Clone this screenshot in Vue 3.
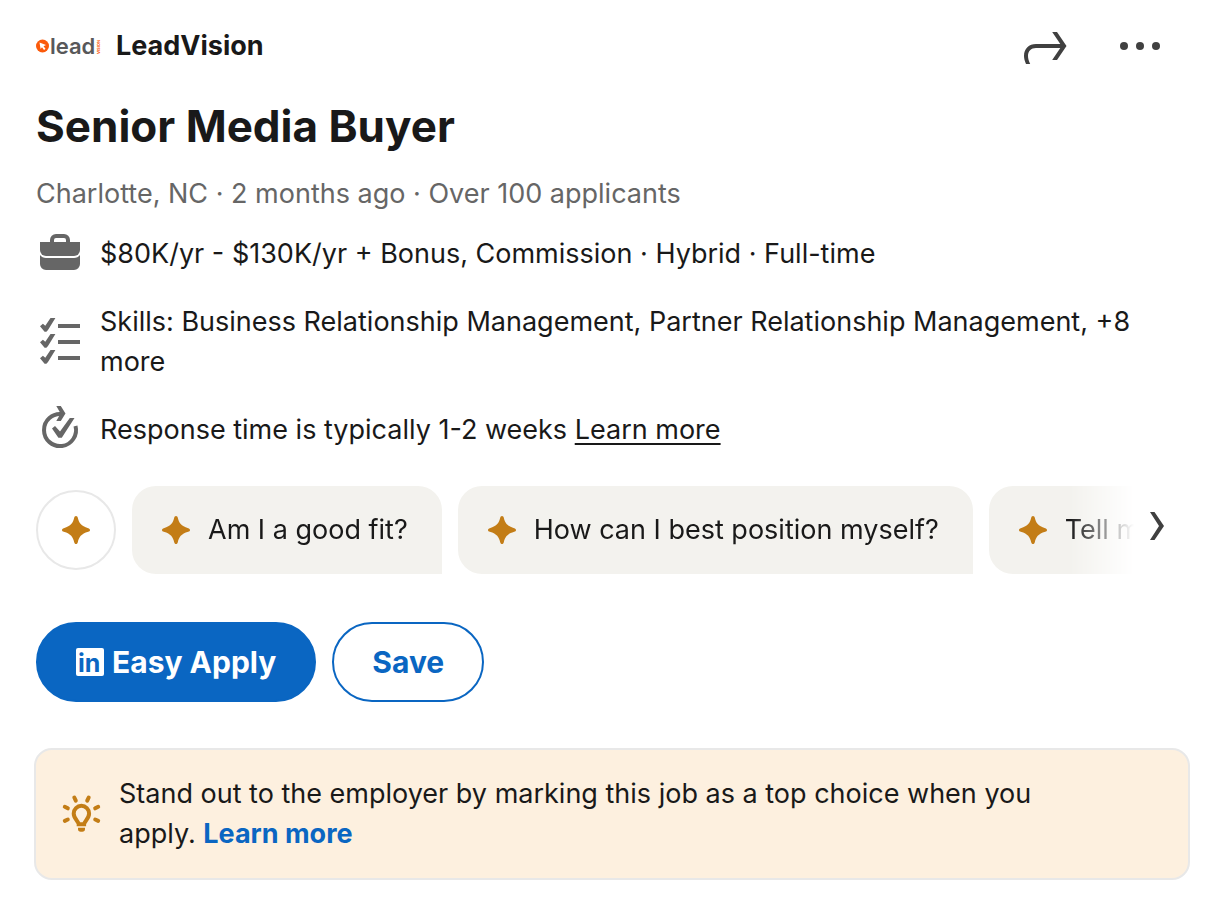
<template>
  <main class="job-page">
    <section class="job-details">
      <header class="job-header">
        <a href="#" class="company">
          <svg class="company-logo" viewBox="0 0 64 24" aria-hidden="true">
            <circle cx="6.5" cy="12" r="6.5" fill="#fb5a0b" />
            <path d="M3.5 8.5 10 11 7.5 12.3 9.5 14.8 8 16 6 13.2 4.6 15z" fill="#fff" />
            <text x="14" y="20" class="logo-word">lead</text>
            <text x="-20" y="64" transform="rotate(-90)" class="logo-side">VISION</text>
          </svg>
          <span class="company-name">LeadVision</span>
        </a>
        <div class="header-actions">
          <button class="icon-btn" aria-label="Share">
            <svg viewBox="0 0 48 48">
              <path d="M6 42C4.500 38.500 4 36 4 34c0-7.500 5-12 12-12h24.300L32.200 10H37l9.500 14L37 38h-4.800l8.100-12H16c-5 0-8 3-8 8 0 2 .7 5 2.200 8z" />
            </svg>
          </button>
          <button class="icon-btn" aria-label="More options">
            <svg viewBox="0 0 48 48">
              <circle cx="8" cy="24" r="4" />
              <circle cx="24" cy="24" r="4" />
              <circle cx="40" cy="24" r="4" />
            </svg>
          </button>
        </div>
      </header>

      <h1>Senior Media Buyer</h1>
      <p class="job-meta">Charlotte, NC · 2 months ago · Over 100 applicants</p>

      <ul class="insights">
        <li>
          <svg class="insight-icon" viewBox="0 0 48 48">
            <path d="M14 12V10a6 6 0 0 1 6-6h8a6 6 0 0 1 6 6v2h-4v-2a2 2 0 0 0-2-2h-8a2 2 0 0 0-2 2v2z" />
            <path d="M4 12h40v8a6 6 0 0 1-6 6H10a6 6 0 0 1-6-6z" />
            <path d="M4 25c1.500 2 3.500 3 6 3h28c2.500 0 4.500-1 6-3v9a6 6 0 0 1-6 6H10a6 6 0 0 1-6-6z" />
          </svg>
          <span>$80K/yr - $130K/yr + Bonus, Commission · Hybrid · Full-time</span>
        </li>
        <li>
          <svg class="insight-icon" viewBox="0 0 48 48">
            <g v-for="y in [0, 16, 32]" :key="y" :transform="`translate(4 ${y})`">
              <path d="M0 8.300l2.900-2.500 2.400 2L10.500 0h4.900L8 12l-1.600 1.800H4.600z" />
              <path d="M18 6h22v4H18z" />
            </g>
          </svg>
          <span>Skills: Business Relationship Management, Partner Relationship Management, +8 more</span>
        </li>
        <li>
          <svg class="insight-icon" viewBox="0 0 48 48">
            <path d="M39.500 20A16 16 0 1 1 26 8.200" fill="none" stroke="currentColor" stroke-width="4" />
            <path d="M20.300 0h4.500l4.700 7.600-4.700 7.400h-4.500l4.300-7.400z" />
            <path d="M16 22.500l3-2.500 5 5.400L33.800 12h4.700L25.800 31.700h-3.400z" />
          </svg>
          <span>Response time is typically 1-2 weeks <a href="#" class="text-link">Learn more</a></span>
        </li>
      </ul>

      <div class="prompts">
        <button class="spark-btn" aria-label="Ask about this job">
          <svg class="spark" viewBox="0 0 28 28"><path :d="sparkPath" /></svg>
        </button>
        <div class="prompt-list">
          <button v-for="prompt in prompts" :key="prompt" class="prompt">
            <svg class="spark" viewBox="0 0 28 28"><path :d="sparkPath" /></svg>
            <span>{{ prompt }}</span>
          </button>
        </div>
        <button class="next-btn" aria-label="Next">
          <svg viewBox="0 0 14 28"><path d="M0 0h4.500L14 14 4.500 28H0l9-14z" /></svg>
        </button>
      </div>

      <div class="actions">
        <button class="btn btn-apply">
          <svg viewBox="0 0 28 28" aria-hidden="true">
            <rect width="28" height="28" rx="2" fill="#fff" />
            <text x="2" y="24" class="in-mark">in</text>
          </svg>
          <span>Easy Apply</span>
        </button>
        <button class="btn btn-save">Save</button>
      </div>
    </section>

    <aside class="top-choice">
      <svg class="bulb" viewBox="0 0 48 48">
        <path d="M20.700 34.300c0-3-5-5.500-5-10.800a7.700 7.700 0 0 1 15.400 0c0 5.300-5 7.800-5 10.800z" class="bulb-glass" />
        <path d="M20 37.700h7v1.300a2.700 2.700 0 0 1-2.700 2.700h-1.600A2.700 2.700 0 0 1 20 39z" fill="currentColor" />
        <path d="M16.300 7.500l1.500 3.200M30.700 7.500l-1.500 3.200M6.800 16.800l3 1.500M40.200 16.800l-3 1.500M6.800 30.800l3-1.300M40.200 30.800l-3-1.300" class="bulb-rays" />
      </svg>
      <p>
        Stand out to the employer by marking this job as a top choice when you apply.
        <a href="#">Learn more</a>
      </p>
    </aside>
  </main>
</template>

<script setup>
import { ref } from 'vue'

const prompts = ref([
  'Am I a good fit?',
  'How can I best position myself?',
  'Tell me more'
])

const sparkPath =
  'M14 0c1 0 1.500.7 1.800 1.800 1.200 5.200 3.200 8.200 10.400 10.400C27.300 12.500 28 13 28 14s-.7 1.500-1.800 1.800c-7.200 2.200-9.200 5.200-10.400 10.400C15.500 27.300 15 28 14 28s-1.500-.7-1.800-1.800C11 21 9 18 1.800 15.800.7 15.500 0 15 0 14s.7-1.500 1.800-1.800C9 10 11 7 12.200 1.800 12.500.7 13 0 14 0z'
</script>

<style>
body {
  background: #fff;
}
</style>

<style scoped>
.job-page {
  box-sizing: border-box;
  padding: 22px 32px 30px 34px;
  font-family: Inter, "Liberation Sans", sans-serif;
  font-size: 27px;
  line-height: 40px;
  color: #191919;
}

.job-details {
  padding: 0 26px 0 2px;
}

button {
  padding: 0;
  border: none;
  background: none;
  font: inherit;
  color: inherit;
  cursor: pointer;
}

svg {
  display: block;
  flex-shrink: 0;
  overflow: visible;
  fill: currentColor;
}

p,
h1,
ul {
  margin: 0;
  padding: 0;
}

.job-header {
  display: flex;
  justify-content: space-between;
  align-items: center;
}

.company {
  display: flex;
  align-items: center;
  gap: 16px;
  color: inherit;
  text-decoration: none;
}

.company-logo {
  width: 64px;
  height: 24px;
}

.logo-word {
  font-size: 22px;
  font-weight: 600;
  fill: #58585a;
}

.logo-side {
  font-size: 4px;
  font-weight: 700;
  fill: #fb5a0b;
}

.company-name {
  font-weight: 700;
}

.header-actions {
  display: flex;
  gap: 48px;
  color: #404040;
}

.icon-btn svg {
  width: 48px;
  height: 48px;
}

h1 {
  margin-top: 26px;
  font-size: 44px;
  font-weight: 700;
  line-height: 60px;
}

.job-meta {
  margin-top: 18px;
  color: #666;
}

.insights {
  display: flex;
  flex-direction: column;
  gap: 24px;
  margin-top: 16px;
  list-style: none;
}

.insights li {
  display: flex;
  align-items: center;
  gap: 16px;
}

.insight-icon {
  width: 48px;
  height: 48px;
  color: #666;
}

.text-link {
  color: inherit;
  text-underline-offset: 4px;
}

.prompts {
  display: flex;
  align-items: center;
  gap: 16px;
  margin-top: 32px;
}

.spark {
  width: 28px;
  height: 28px;
  color: #c37d16;
}

.spark-btn {
  display: flex;
  flex-shrink: 0;
  align-items: center;
  justify-content: center;
  box-sizing: border-box;
  width: 80px;
  height: 80px;
  border: 2px solid #e8e8e8;
  border-radius: 50%;
}

.prompt-list {
  display: flex;
  flex: 1;
  gap: 16px;
  min-width: 0;
  overflow: hidden;
  mask-image: linear-gradient(to right, #000 calc(100% - 64px), transparent);
}

.prompt {
  display: flex;
  flex-shrink: 0;
  align-items: center;
  gap: 18px;
  height: 88px;
  padding: 0 34px 0 30px;
  border-radius: 24px 24px 0 24px;
  background: #f3f2ee;
  white-space: nowrap;
}

.next-btn {
  padding-bottom: 8px;
  color: #404040;
}

.next-btn svg {
  width: 14px;
  height: 28px;
}

.actions {
  display: flex;
  gap: 16px;
  margin-top: 48px;
}

.btn {
  display: flex;
  align-items: center;
  gap: 8px;
  box-sizing: border-box;
  height: 80px;
  padding: 0 38px;
  border: 2px solid #0a66c2;
  border-radius: 40px;
  font-size: 30px;
  font-weight: 700;
}

.btn-apply {
  background: #0a66c2;
  color: #fff;
}

.btn-apply svg {
  width: 28px;
  height: 28px;
}

.in-mark {
  font-size: 25px;
  font-weight: 700;
  fill: #0a66c2;
}

.btn-save {
  color: #0a66c2;
}

.top-choice {
  display: flex;
  align-items: center;
  gap: 13px;
  margin-top: 46px;
  padding: 24px 96px 24px 22px;
  border: 2px solid #e8e8e8;
  border-radius: 18px;
  background: #fdf0df;
}

.bulb {
  width: 48px;
  height: 48px;
  color: #c37d16;
}

.bulb-glass {
  fill: none;
  stroke: currentColor;
  stroke-width: 4;
}

.bulb-rays {
  fill: none;
  stroke: currentColor;
  stroke-width: 4;
  stroke-linecap: round;
}

.top-choice a {
  font-weight: 700;
  color: #0a66c2;
  text-decoration: none;
}
</style>
